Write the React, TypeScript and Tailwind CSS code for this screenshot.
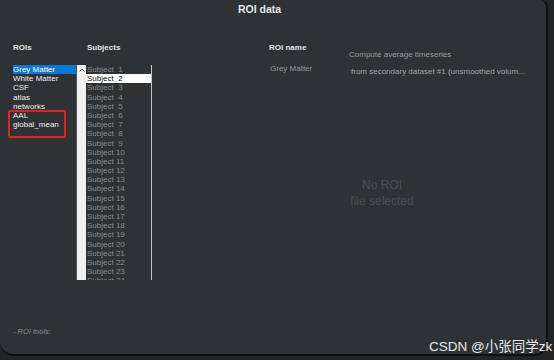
const rois = ['Grey Matter', 'White Matter', 'CSF', 'atlas', 'networks', 'AAL', 'global_mean']

const subjects = Array.from({ length: 24 }, (_, i) =>
  i < 9 ? `Subject  ${i + 1}` : `Subject ${i + 1}`,
)

export default function App() {
  return (
    <div className="relative h-[360px] w-[554px] overflow-hidden bg-[#222426] font-['Liberation_Sans',Arial,sans-serif]">
      <div className="relative flex h-[356px] w-[548px] flex-col rounded-tr-[8px] rounded-bl-[14px] rounded-br-[14px] border-r-2 border-b-2 border-[#0e0f10] bg-[#2f3235]">
        <div className="h-[18px] pl-[238px] text-[10.5px] font-bold leading-[18px] text-[#e6e6e6]">
          ROI data
        </div>

        <div className="mt-[25px] flex items-start">
          {/* ROIs */}
          <div className="ml-[13px] w-[63px]">
            <div className="h-[10px] text-[8px] font-bold leading-[10px] text-[#e2e2e2]">ROIs</div>
            <div className="mt-[12px]">
              {rois.map((r, i) => (
                <div
                  key={r}
                  className={`h-[9.2px] text-[8px] leading-[9.2px] ${
                    i === 0 ? 'bg-[#0a78d6] text-white' : 'text-[#eeeeee]'
                  }`}
                >
                  {r}
                </div>
              ))}
            </div>
          </div>

          {/* Subjects */}
          <div className="w-[76px]">
            <div className="h-[10px] pl-[11px] text-[8px] font-bold leading-[10px] text-[#e2e2e2]">Subjects</div>
            <div className="mt-[12px] flex h-[215px]">
              <div className="flex w-[10px] justify-center border-l border-[#555] bg-[#f0f0f0] pt-[3px]">
                <svg width="6" height="4" viewBox="0 0 6 4">
                  <path d="M0.5 3.5 L3 1 L5.5 3.5" fill="none" stroke="#6a6a6a" strokeWidth="1" />
                </svg>
              </div>
              <div className="w-[66px] overflow-hidden border-r border-[#c4c4c4]">
                {subjects.map((s, i) => (
                  <div
                    key={s}
                    className={`h-[9.2px] whitespace-pre pl-[1px] text-[8px] leading-[9.2px] ${
                      i === 1 ? 'bg-white text-[#111]' : 'text-[#8a8a8a]'
                    }`}
                  >
                    {s}
                  </div>
                ))}
              </div>
            </div>
          </div>

          {/* ROI details */}
          <div className="ml-[117px] flex w-[226px] flex-col">
            <div className="grid grid-cols-[80px_1fr] items-start">
              <div className="h-[10px] text-[8px] font-bold leading-[10px] text-[#e2e2e2]">ROI name</div>
              <div className="mt-[6.5px] whitespace-nowrap text-[8px] leading-[10px] text-[#9c9c9c]">
                Compute average timeseries
              </div>
              <div className="mt-[4.5px] pl-[1px] text-[8px] leading-[9.2px] text-[#999]">Grey Matter</div>
              <div className="mt-[7px] whitespace-nowrap pl-[2px] text-[8px] leading-[10px] text-[#a4a4a4]">
                from secondary dataset #1 (unsmoothed volum...
              </div>
            </div>
            <div className="mt-[100px] text-center text-[12px] leading-[16px] text-[#4b4f53]">
              <div>No ROI</div>
              <div>file selected</div>
            </div>
          </div>
        </div>

        <div className="mt-auto pb-[17px] pl-[13px] text-[7.5px] italic leading-[10px] text-[#8c8c8c]">
          - ROI tools:
        </div>

        <div className="absolute left-[8px] top-[110px] h-[28px] w-[58px] rounded-[2px] border-2 border-[#e3211f]" />
      </div>

      <div className="absolute left-[429px] top-[338px] whitespace-nowrap font-['Liberation_Sans','Noto_Sans_CJK_SC',sans-serif] text-[13.5px] leading-[18px] text-[#e8e8e8]">
        CSDN @小张同学zk
      </div>
    </div>
  )
}
